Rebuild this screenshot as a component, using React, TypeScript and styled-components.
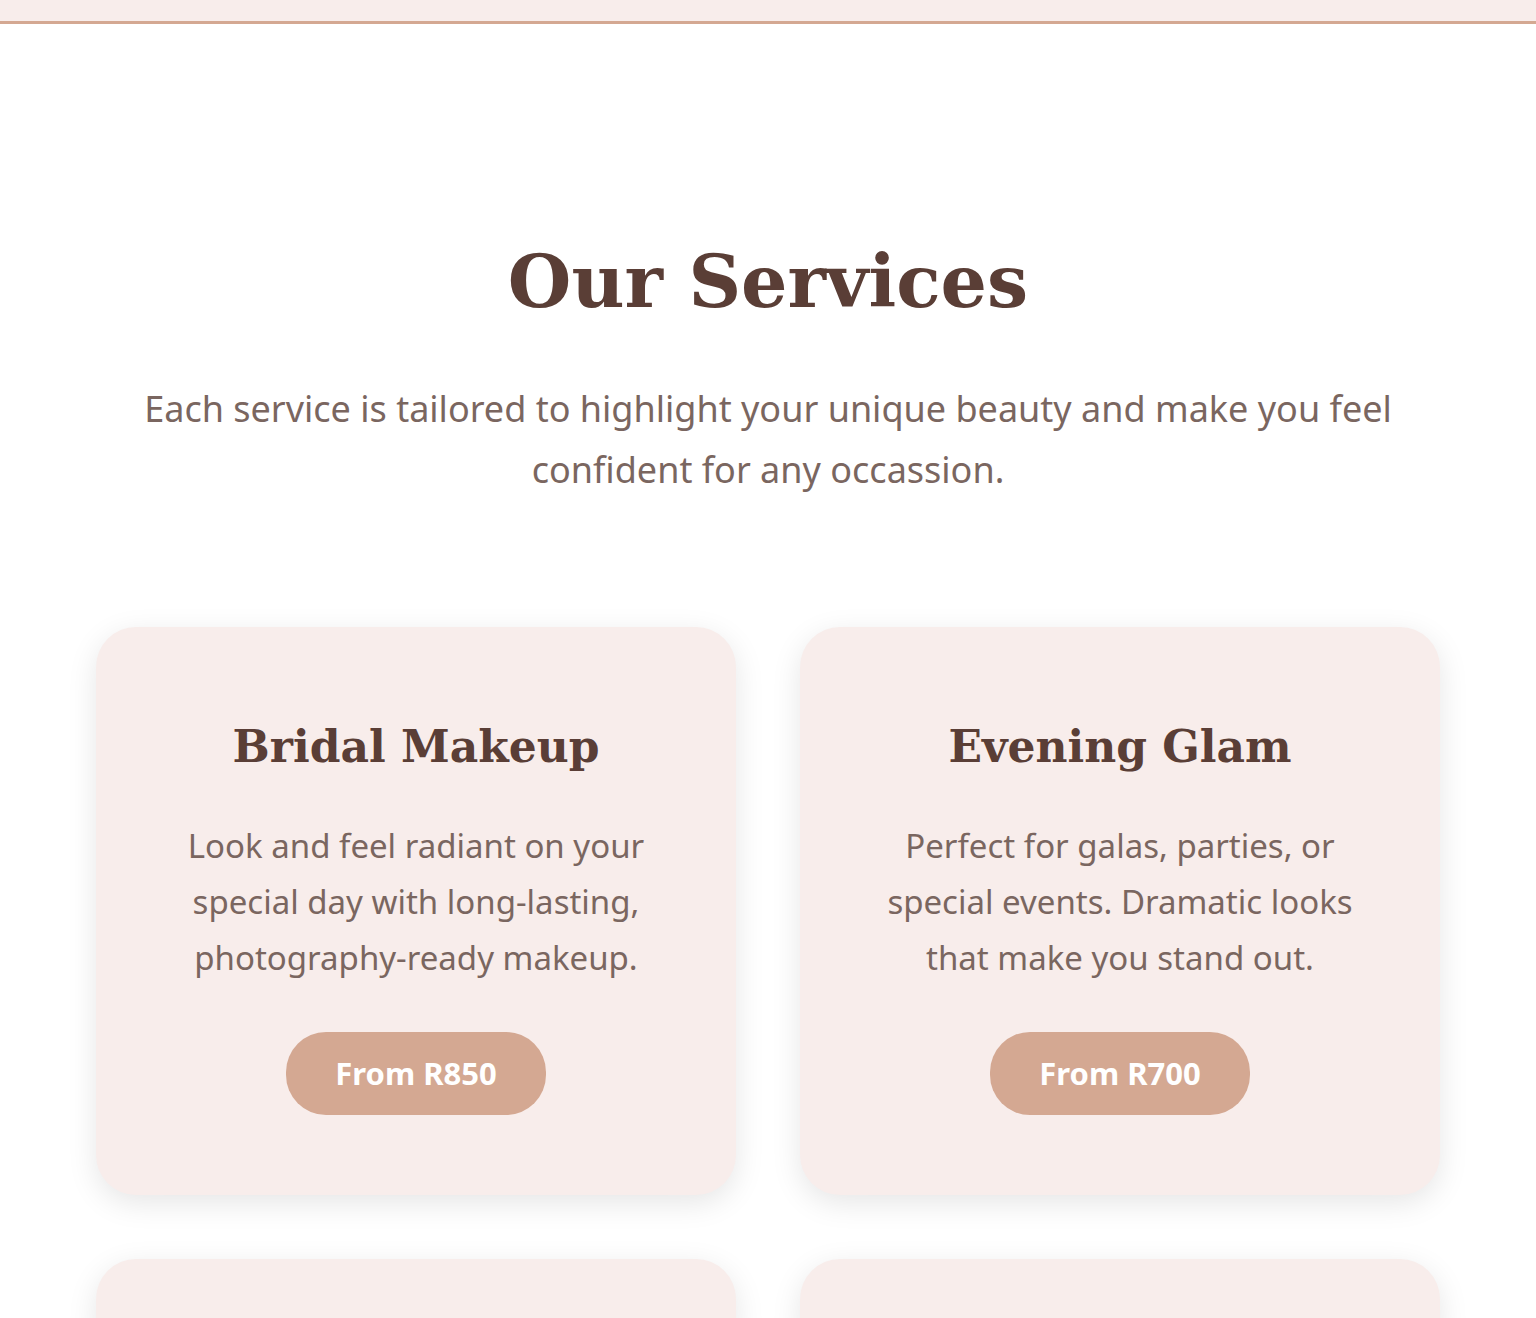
import React from 'react';
import styled, { createGlobalStyle } from 'styled-components';

const serif = `'DejaVu Serif', 'Liberation Serif', serif`;
const sans = `'Noto Sans', 'Open Sans', sans-serif`;

const GlobalStyle = createGlobalStyle`
  *, *::before, *::after { box-sizing: border-box; }
  body { margin: 0; background: #fff; color: #5a3e36; font-family: ${sans}; }
`;

const Page = styled.div`
  height: 100vh;
  overflow: hidden;
`;

const HeaderEdge = styled.header`
  height: 24px;
  background: #f8edeb;
  border-bottom: 3px solid #d4a892;
`;

const Services = styled.main`
  padding: 192px 96px;
  text-align: center;
`;

const Title = styled.h1`
  margin: 0 0 32px;
  font: 700 73px/130px ${serif};
`;

const Intro = styled.p`
  margin: 0 0 127px;
  font-size: 36px;
  line-height: 61px;
  color: #7a6660;
`;

const Grid = styled.div`
  display: grid;
  grid-template-columns: repeat(2, 1fr);
  gap: 64px;
`;

const Card = styled.article`
  padding: 80px;
  border-radius: 40px;
  background: #f8edeb;
  box-shadow: 0 8px 30px rgba(0, 0, 0, 0.1);
`;

const CardTitle = styled.h2`
  margin: 0 0 31px;
  font: 700 44px/80px ${serif};
`;

const CardText = styled.p`
  margin: 0 0 46px;
  font-size: 33px;
  line-height: 56px;
  color: #7a6660;
`;

const Price = styled.span`
  display: inline-block;
  vertical-align: top;
  padding: 16px 49px;
  border-radius: 40px;
  background: #d4a892;
  color: #fff;
  font-size: 31px;
  line-height: 51px;
  font-weight: 700;
`;

const services = [
  { name: 'Bridal Makeup', text: 'Look and feel radiant on your special day with long-lasting, photography-ready makeup.', price: 'From R850' },
  { name: 'Evening Glam', text: 'Perfect for galas, parties, or special events. Dramatic looks that make you stand out.', price: 'From R700' },
];

export default function App() {
  return (
    <Page>
      <GlobalStyle />
      <HeaderEdge />
      <Services>
        <Title>Our Services</Title>
        <Intro>Each service is tailored to highlight your unique beauty and make you feel confident for any occassion.</Intro>
        <Grid>
          {services.map((s) => (
            <Card key={s.name}>
              <CardTitle>{s.name}</CardTitle>
              <CardText>{s.text}</CardText>
              <Price>{s.price}</Price>
            </Card>
          ))}
          <Card />
          <Card />
        </Grid>
      </Services>
    </Page>
  );
}
